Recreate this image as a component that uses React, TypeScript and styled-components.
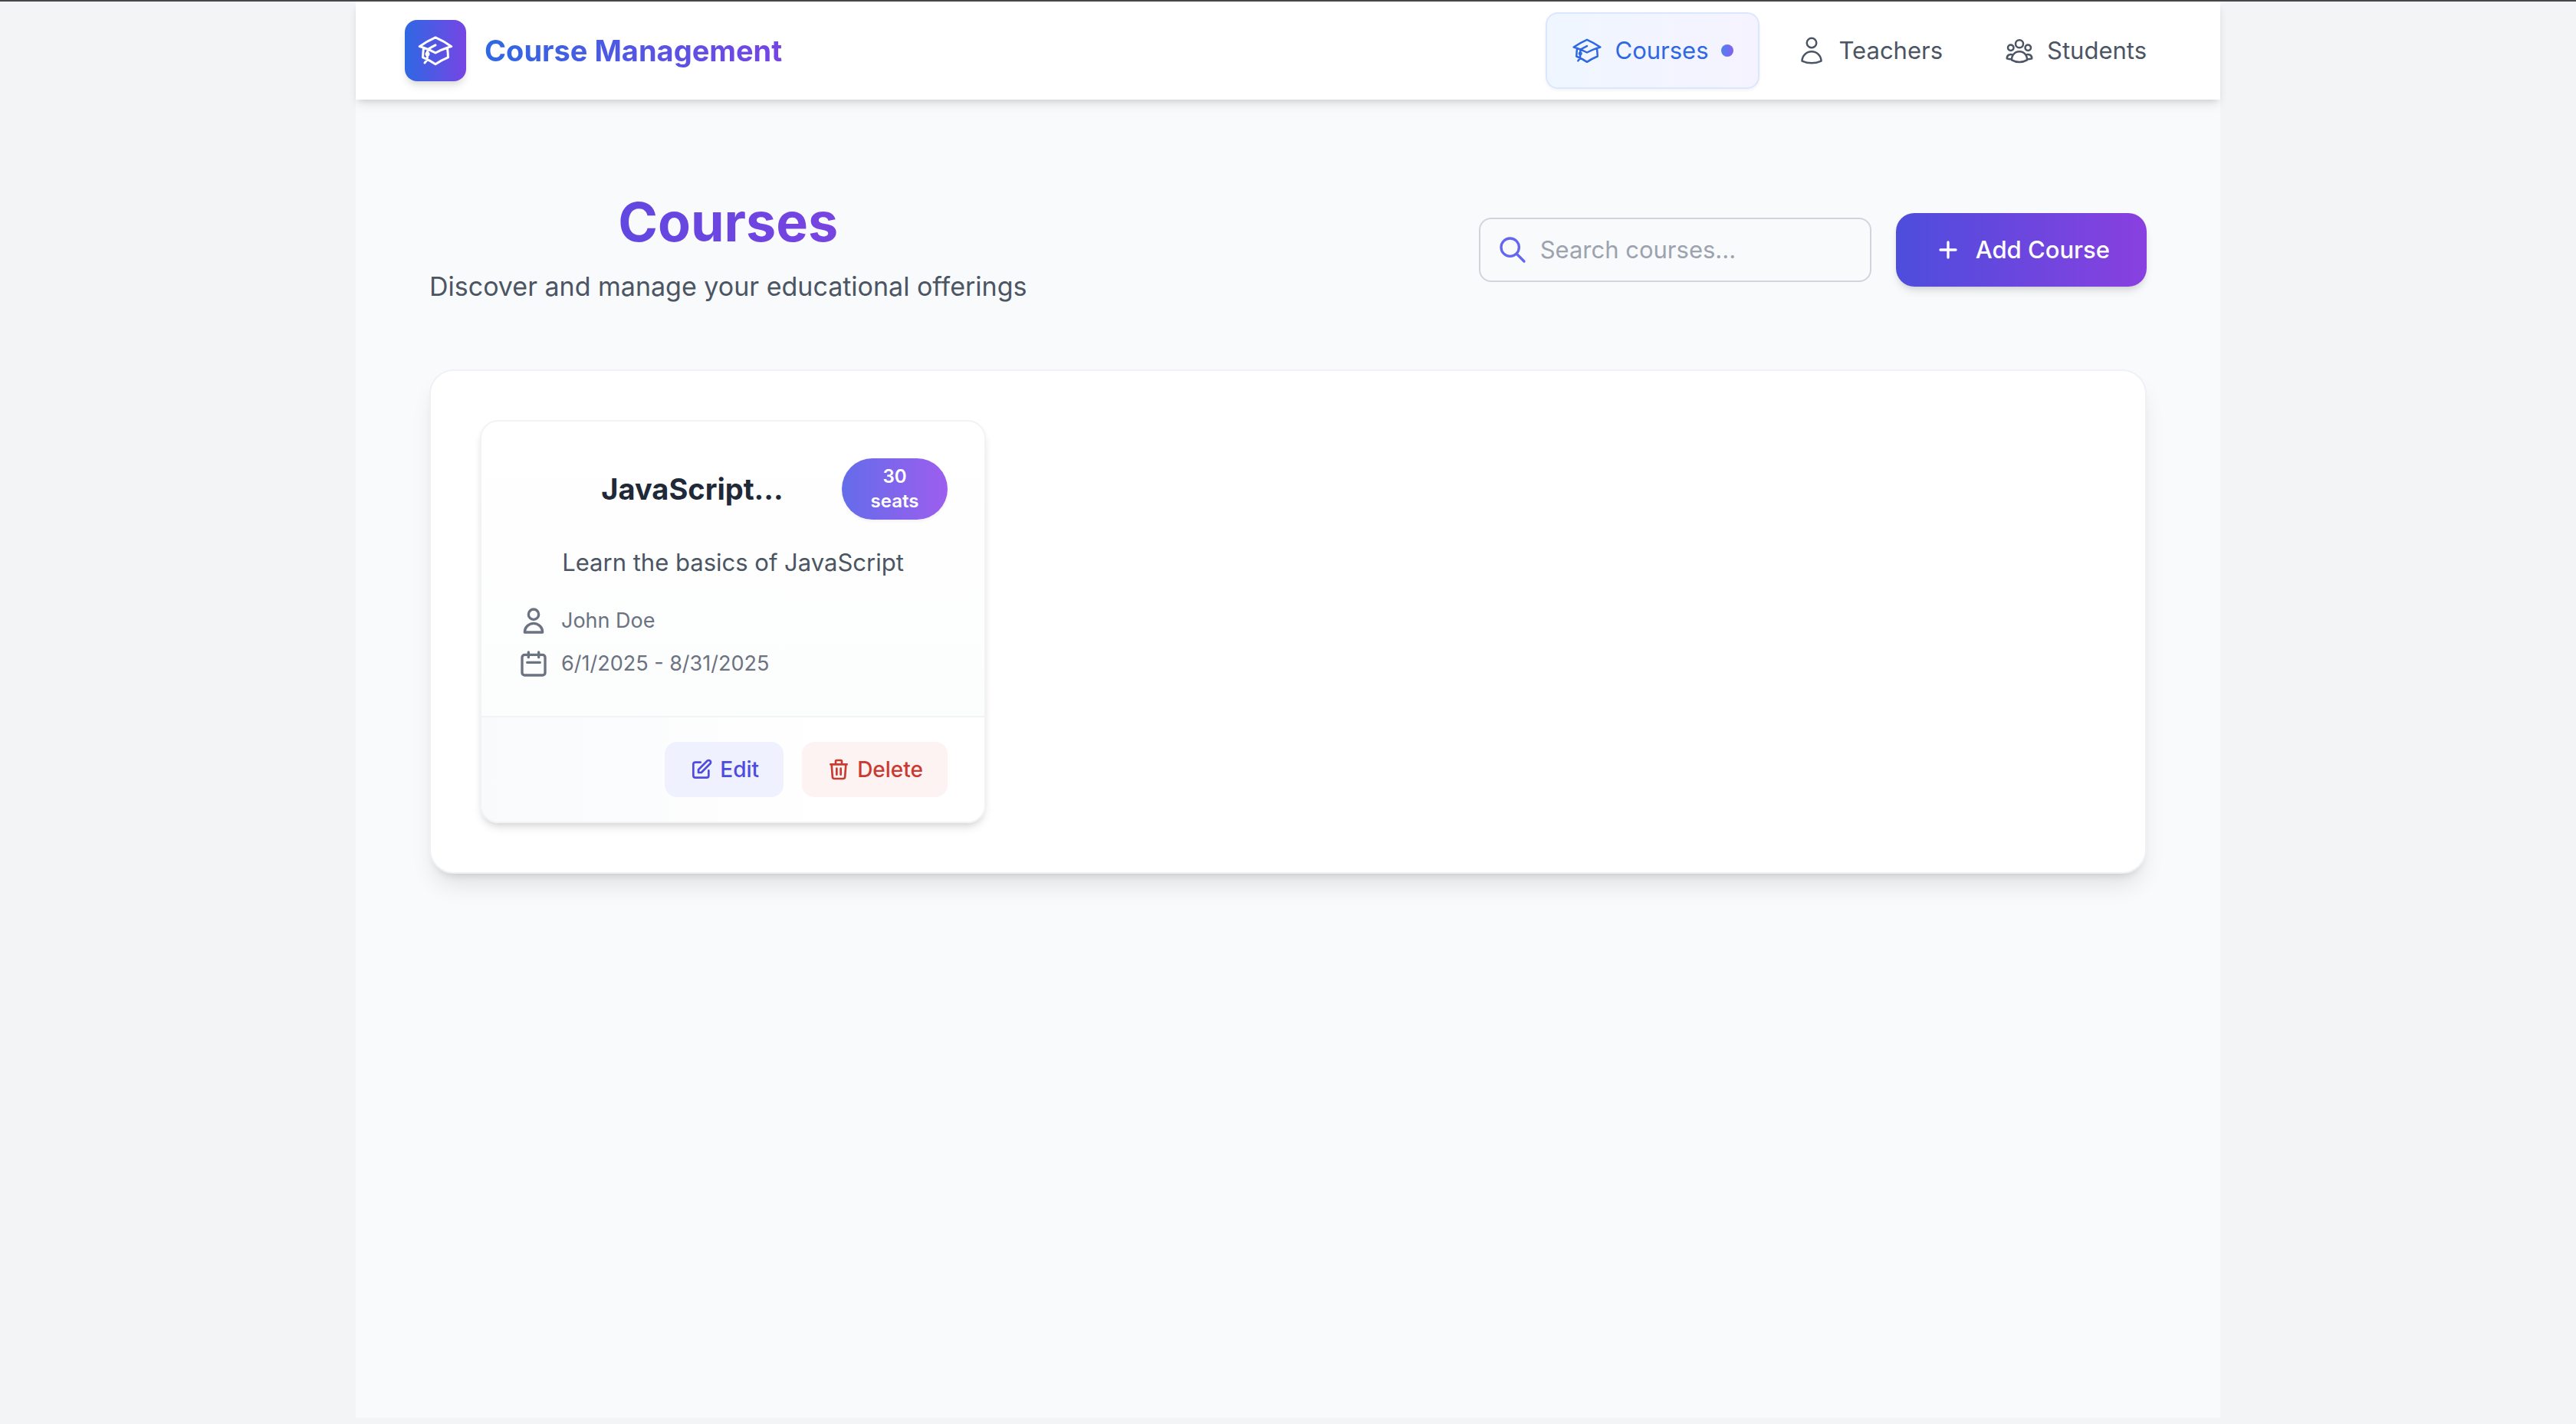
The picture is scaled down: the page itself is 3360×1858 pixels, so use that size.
import React from "react";
import styled, { createGlobalStyle } from "styled-components";

const Global = createGlobalStyle`
  *, *::before, *::after { box-sizing: border-box; }
  body { margin: 0; background: #f3f4f6; font-family: Inter, "Liberation Sans", sans-serif; color: #1f2937; }
  h1, h2, p { margin: 0; }
  button, input { font: inherit; }
`;

const Screen = styled.div`
  min-height: 100vh;
  padding-bottom: 8px;
  border-top: 2px solid #43474a;
  display: flex;
  flex-direction: column;
  align-items: center;
`;

const Shell = styled.div`
  flex: 1;
  width: 100%;
  max-width: 2432px;
  background: #f9fafc;
`;

const Header = styled.header`
  height: 128px;
  padding: 0 64px;
  display: flex;
  align-items: center;
  justify-content: space-between;
  background: #fff;
  box-shadow: 0 8px 12px -2px rgba(0, 0, 0, 0.1), 0 4px 8px -4px rgba(0, 0, 0, 0.12);
`;

const Brand = styled.div`
  display: flex;
  align-items: center;
  gap: 24px;
`;

const Logo = styled.span`
  width: 80px;
  height: 80px;
  border-radius: 16px;
  display: grid;
  place-items: center;
  color: #fff;
  background: linear-gradient(90deg, #2f68e3, #7645e4);
  box-shadow: 0 8px 12px -2px rgba(0, 0, 0, 0.1), 0 4px 8px -4px rgba(0, 0, 0, 0.1);
`;

const BrandName = styled.span`
  font-size: 38px;
  line-height: 56px;
  font-weight: 700;
  color: transparent;
  background: linear-gradient(90deg, #2f68e3, #7645e4);
  background-clip: text;
`;

const Nav = styled.nav`
  display: flex;
  gap: 16px;
`;

const NavLink = styled.a<{ $active?: boolean }>`
  height: 100px;
  padding: 0 32px;
  display: flex;
  align-items: center;
  gap: 16px;
  border: ${(p) => (p.$active ? "2px solid #dbe7fc" : "0")};
  border-radius: 16px;
  font-size: 31px;
  line-height: 48px;
  text-decoration: none;
  color: ${(p) => (p.$active ? "#2f68e3" : "#4b5563")};
  background: ${(p) => (p.$active ? "linear-gradient(90deg, #eff6ff, #f5f3ff)" : "none")};
  box-shadow: ${(p) => (p.$active ? "0 2px 4px rgba(0, 0, 0, 0.05)" : "none")};
`;

const Dot = styled.span`
  width: 16px;
  height: 16px;
  border-radius: 50%;
  background: linear-gradient(90deg, #4b82ee, #8560ee);
`;

const Main = styled.main`
  padding: 120px 96px;
`;

const TitleBar = styled.div`
  display: flex;
  align-items: center;
  justify-content: space-between;
  margin-bottom: 80px;
`;

const Heading = styled.div`
  text-align: center;
`;

const Title = styled.h1`
  font-size: 70px;
  line-height: 80px;
  margin-bottom: 16px;
  font-weight: 700;
  color: transparent;
  background: linear-gradient(90deg, #4f4bdf, #8940e2);
  background-clip: text;
`;

const Subtitle = styled.p`
  font-size: 34px;
  line-height: 56px;
  color: #4b5563;
`;

const Actions = styled.div`
  display: flex;
  align-items: center;
  gap: 32px;
`;

const SearchBox = styled.label`
  width: 512px;
  height: 84px;
  padding: 0 22px;
  display: flex;
  align-items: center;
  gap: 16px;
  border: 2px solid #d1d5db;
  border-radius: 16px;
  color: #6366f1;
`;

const SearchInput = styled.input`
  flex: 1;
  min-width: 0;
  padding: 0;
  border: 0;
  outline: 0;
  background: none;
  font-size: 31px;
  line-height: 48px;
  color: #1f2937;
  &::placeholder { color: #9ca3af; opacity: 1; }
`;

const AddButton = styled.button`
  height: 96px;
  padding: 0 48px;
  display: flex;
  align-items: center;
  gap: 16px;
  border: 0;
  border-radius: 24px;
  font-size: 31px;
  line-height: 48px;
  font-weight: 500;
  color: #fff;
  background: linear-gradient(90deg, #4d4ddc, #8940e0);
  box-shadow: 0 8px 12px -2px rgba(0, 0, 0, 0.1), 0 4px 8px -4px rgba(0, 0, 0, 0.12);
`;

const Panel = styled.section`
  padding: 64px;
  display: grid;
  grid-template-columns: repeat(3, 1fr);
  gap: 64px;
  border: 2px solid #f0f1f4;
  border-radius: 32px;
  background: #fff;
  box-shadow: 0 20px 30px -6px rgba(0, 0, 0, 0.1), 0 8px 12px -8px rgba(0, 0, 0, 0.16);
`;

const Card = styled.article`
  overflow: hidden;
  border: 2px solid #f2f3f5;
  border-radius: 24px;
  background: linear-gradient(180deg, #fff, #fbfcfc);
  box-shadow: 0 8px 12px -2px rgba(0, 0, 0, 0.1), 0 4px 8px -4px rgba(0, 0, 0, 0.12);
`;

const CardBody = styled.div`
  padding: 48px;
`;

const CardHead = styled.div`
  display: flex;
  align-items: center;
  margin-bottom: 32px;
`;

const CardTitle = styled.h2`
  flex: 1;
  padding-left: 32px;
  text-align: center;
  font-size: 38px;
  line-height: 56px;
  font-weight: 700;
  color: #1f2937;
`;

const Seats = styled.span`
  width: 138px;
  padding: 8px 24px;
  border-radius: 40px;
  text-align: center;
  font-size: 24px;
  line-height: 32px;
  font-weight: 600;
  color: #fff;
  background: linear-gradient(90deg, #646cea, #9d5eee);
  box-shadow: 0 2px 4px rgba(0, 0, 0, 0.06);
`;

const Description = styled.p`
  margin-bottom: 32px;
  text-align: center;
  font-size: 31px;
  line-height: 48px;
  color: #4b5563;
`;

const Meta = styled.p`
  display: flex;
  align-items: center;
  gap: 16px;
  margin-top: 16px;
  font-size: 27px;
  line-height: 40px;
  color: #6b7280;
`;

const CardFoot = styled.div`
  padding: 32px 48px;
  display: flex;
  justify-content: flex-end;
  gap: 24px;
  border-top: 2px solid #f2f3f5;
  background: linear-gradient(90deg, #f9fafc, #fff 70%);
`;

const SmallButton = styled.button<{ $danger?: boolean }>`
  height: 72px;
  padding: 0 32px;
  display: flex;
  align-items: center;
  gap: 8px;
  border: 0;
  border-radius: 16px;
  font-size: 28px;
  line-height: 40px;
  font-weight: 500;
  color: ${(p) => (p.$danger ? "#cb3a31" : "#4f4bdf")};
  background: ${(p) => (p.$danger ? "#fdf3f2" : "#eff1fe")};
`;

type IconProps = { size: number; stroke?: number; children: React.ReactNode };

const Icon = ({ size, stroke = 2, children }: IconProps) => (
  <svg width={size} height={size} viewBox="0 0 24 24" fill="none" stroke="currentColor"
    strokeWidth={stroke} strokeLinecap="round" strokeLinejoin="round" aria-hidden="true">
    {children}
  </svg>
);

const Cap = ({ size }: { size: number }) => (
  <Icon size={size} stroke={1.5}>
    <path d="M4.26 10.147a60.438 60.438 0 0 0-.491 6.347A48.62 48.62 0 0 1 12 20.904a48.62 48.62 0 0 1 8.232-4.41 60.46 60.46 0 0 0-.491-6.347m-15.482 0a50.636 50.636 0 0 0-2.658-.813A59.906 59.906 0 0 1 12 3.493a59.903 59.903 0 0 1 10.399 5.84c-.896.248-1.783.52-2.658.814m-15.482 0A50.717 50.717 0 0 1 12 13.489a50.702 50.702 0 0 1 7.74-3.342M6.75 15a.75.75 0 1 0 0-1.5.75.75 0 0 0 0 1.5Zm0 0v-3.675A55.378 55.378 0 0 1 12 8.443m-7.007 11.55A5.981 5.981 0 0 0 6.75 15.75v-1.5" />
  </Icon>
);

const Teacher = ({ size }: { size: number }) => (
  <Icon size={size} stroke={1.5}>
    <path d="M15.75 6a3.75 3.75 0 1 1-7.5 0 3.75 3.75 0 0 1 7.5 0ZM4.501 20.118a7.5 7.5 0 0 1 14.998 0A17.933 17.933 0 0 1 12 21.75c-2.676 0-5.216-.584-7.499-1.632Z" />
  </Icon>
);

const Group = ({ size }: { size: number }) => (
  <Icon size={size} stroke={1.5}>
    <path d="M18 18.72a9.094 9.094 0 0 0 3.741-.479 3 3 0 0 0-4.682-2.72m.94 3.198.001.031c0 .225-.012.447-.037.666A11.944 11.944 0 0 1 12 21c-2.17 0-4.207-.576-5.963-1.584A6.062 6.062 0 0 1 6 18.719m12 0a5.971 5.971 0 0 0-.941-3.197m0 0A5.995 5.995 0 0 0 12 12.75a5.995 5.995 0 0 0-5.058 2.772m0 0a3 3 0 0 0-4.681 2.72 8.986 8.986 0 0 0 3.74.477m.94-3.197a5.971 5.971 0 0 0-.94 3.197M15 6.75a3 3 0 1 1-6 0 3 3 0 0 1 6 0Zm6 3a2.25 2.25 0 1 1-4.5 0 2.25 2.25 0 0 1 4.5 0Zm-13.5 0a2.25 2.25 0 1 1-4.5 0 2.25 2.25 0 0 1 4.5 0Z" />
  </Icon>
);

export default function App() {
  return (
    <>
      <Global />
      <Screen>
        <Shell>
          <Header>
            <Brand>
              <Logo><Cap size={48} /></Logo>
              <BrandName>Course Management</BrandName>
            </Brand>
            <Nav>
              <NavLink href="#courses" $active><Cap size={40} />Courses<Dot /></NavLink>
              <NavLink href="#teachers"><Teacher size={40} />Teachers</NavLink>
              <NavLink href="#students"><Group size={40} />Students</NavLink>
            </Nav>
          </Header>
          <Main>
            <TitleBar>
              <Heading>
                <Title>Courses</Title>
                <Subtitle>Discover and manage your educational offerings</Subtitle>
              </Heading>
              <Actions>
                <SearchBox>
                  <Icon size={40}><path d="m21 21-6-6m2-5a7 7 0 1 1-14 0 7 7 0 0 1 14 0Z" /></Icon>
                  <SearchInput type="search" placeholder="Search courses..." aria-label="Search courses" />
                </SearchBox>
                <AddButton type="button">
                  <Icon size={40}><path d="M12 6v12M6 12h12" /></Icon>Add Course
                </AddButton>
              </Actions>
            </TitleBar>
            <Panel>
              <Card>
                <CardBody>
                  <CardHead>
                    <CardTitle>JavaScript...</CardTitle>
                    <Seats>30 seats</Seats>
                  </CardHead>
                  <Description>Learn the basics of JavaScript</Description>
                  <Meta><Icon size={40}><path d="M16 7a4 4 0 1 1-8 0 4 4 0 0 1 8 0ZM12 14a7 7 0 0 0-7 7h14a7 7 0 0 0-7-7Z" /></Icon>John Doe</Meta>
                  <Meta><Icon size={40}><path d="M8 7V3m8 4V3m-9 8h10M5 21h14a2 2 0 0 0 2-2V7a2 2 0 0 0-2-2H5a2 2 0 0 0-2 2v12a2 2 0 0 0 2 2Z" /></Icon>6/1/2025 - 8/31/2025</Meta>
                </CardBody>
                <CardFoot>
                  <SmallButton type="button">
                    <Icon size={32}><path d="M11 5H6a2 2 0 0 0-2 2v11a2 2 0 0 0 2 2h11a2 2 0 0 0 2-2v-5m-1.414-9.414a2 2 0 1 1 2.828 2.828L11.828 15H9v-2.828l8.586-8.586Z" /></Icon>Edit
                  </SmallButton>
                  <SmallButton type="button" $danger>
                    <Icon size={32}><path d="m19 7-.867 12.142A2 2 0 0 1 16.138 21H7.862a2 2 0 0 1-1.995-1.858L5 7m5 4v6m4-6v6m1-10V4a1 1 0 0 0-1-1h-4a1 1 0 0 0-1 1v3M4 7h16" /></Icon>Delete
                  </SmallButton>
                </CardFoot>
              </Card>
            </Panel>
          </Main>
        </Shell>
      </Screen>
    </>
  );
}
